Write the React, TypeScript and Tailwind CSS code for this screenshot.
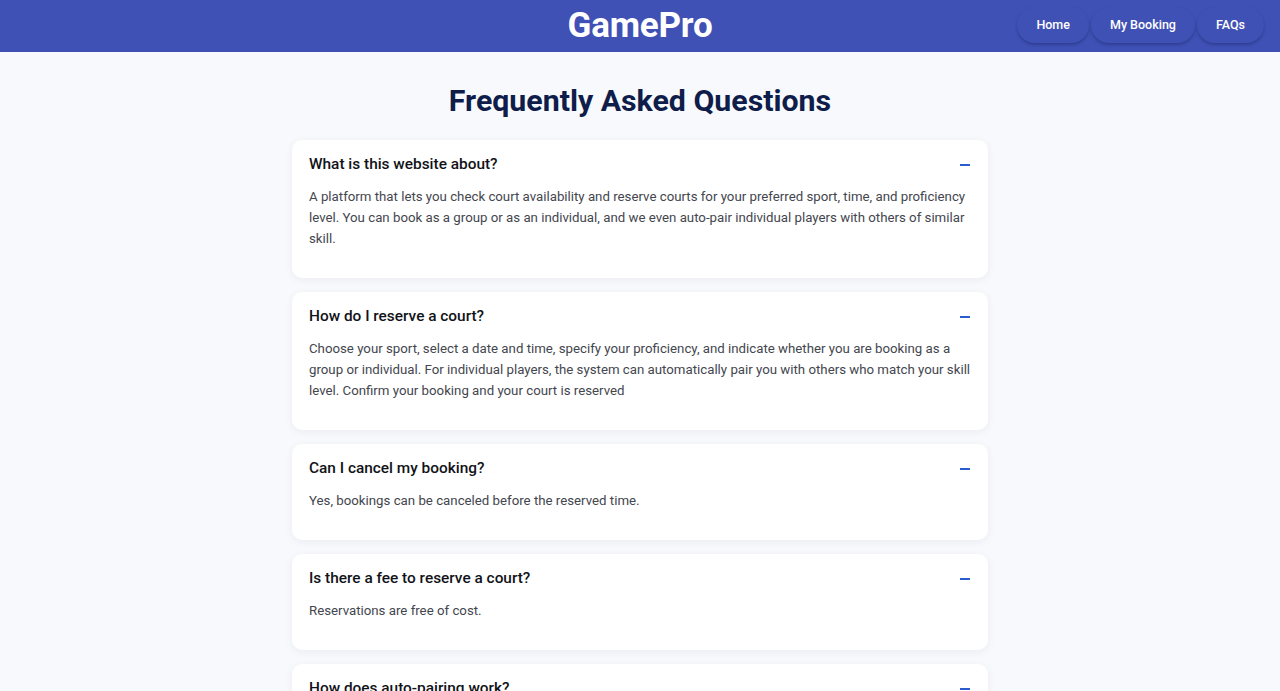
const faqs = [
  {
    q: 'What is this website about?',
    a: 'A platform that lets you check court availability and reserve courts for your preferred sport, time, and proficiency level. You can book as a group or as an individual, and we even auto-pair individual players with others of similar skill.',
  },
  {
    q: 'How do I reserve a court?',
    a: 'Choose your sport, select a date and time, specify your proficiency, and indicate whether you are booking as a group or individual. For individual players, the system can automatically pair you with others who match your skill level. Confirm your booking and your court is reserved',
  },
  {
    q: 'Can I cancel my booking?',
    a: 'Yes, bookings can be canceled before the reserved time.',
  },
  {
    q: 'Is there a fee to reserve a court?',
    a: 'Reservations are free of cost.',
  },
  {
    q: 'How does auto-pairing work?',
    a: 'When you book as an individual, we match you with other players who selected the same sport, time slot, and a similar proficiency level.',
  },
];

function FaqCard({ q, a }: { q: string; a: string }) {
  return (
    <div className="bg-white rounded-[10px] shadow-[0_2px_8px_rgba(30,40,90,0.06)] px-[17px] pt-[13px] pb-[29px]">
      <div className="flex items-center justify-between h-6">
        <h3 className="text-[15.4px] font-medium text-[#111318]">{q}</h3>
        <span className="block w-[10px] h-[2px] bg-[#2a5bd0] mr-px" />
      </div>
      <p className="mt-[9px] text-[13.25px] leading-[21px] text-[#43464e]">{a}</p>
    </div>
  );
}

export default function App() {
  return (
    <div className="min-h-screen bg-[#f8f9fc] font-['Roboto','Liberation_Sans',sans-serif]">
      <header className="relative h-[52px] bg-[#3f51b5] flex items-center justify-center">
        <h1 className="text-[35px] font-bold text-white tracking-[-0.2px]">GamePro</h1>
        <nav className="absolute right-4 top-[7px] flex gap-[2px]">
          {['Home', 'My Booking', 'FAQs'].map((l) => (
            <button
              key={l}
              className="h-[36px] px-[19px] rounded-full bg-[#3f51b5] text-white text-[12.5px] font-medium shadow-[0_2px_3px_rgba(20,30,90,0.35)]"
            >
              {l}
            </button>
          ))}
        </nav>
      </header>

      <main className="pt-[29px] flex flex-col items-center">
        <h2 className="text-[30.3px] leading-[40px] font-bold text-[#0f1d4a] mb-[19px]">
          Frequently Asked Questions
        </h2>
        <div className="w-[696px] flex flex-col gap-[14px] pb-10">
          {faqs.map((f) => (
            <FaqCard key={f.q} q={f.q} a={f.a} />
          ))}
        </div>
      </main>
    </div>
  );
}
